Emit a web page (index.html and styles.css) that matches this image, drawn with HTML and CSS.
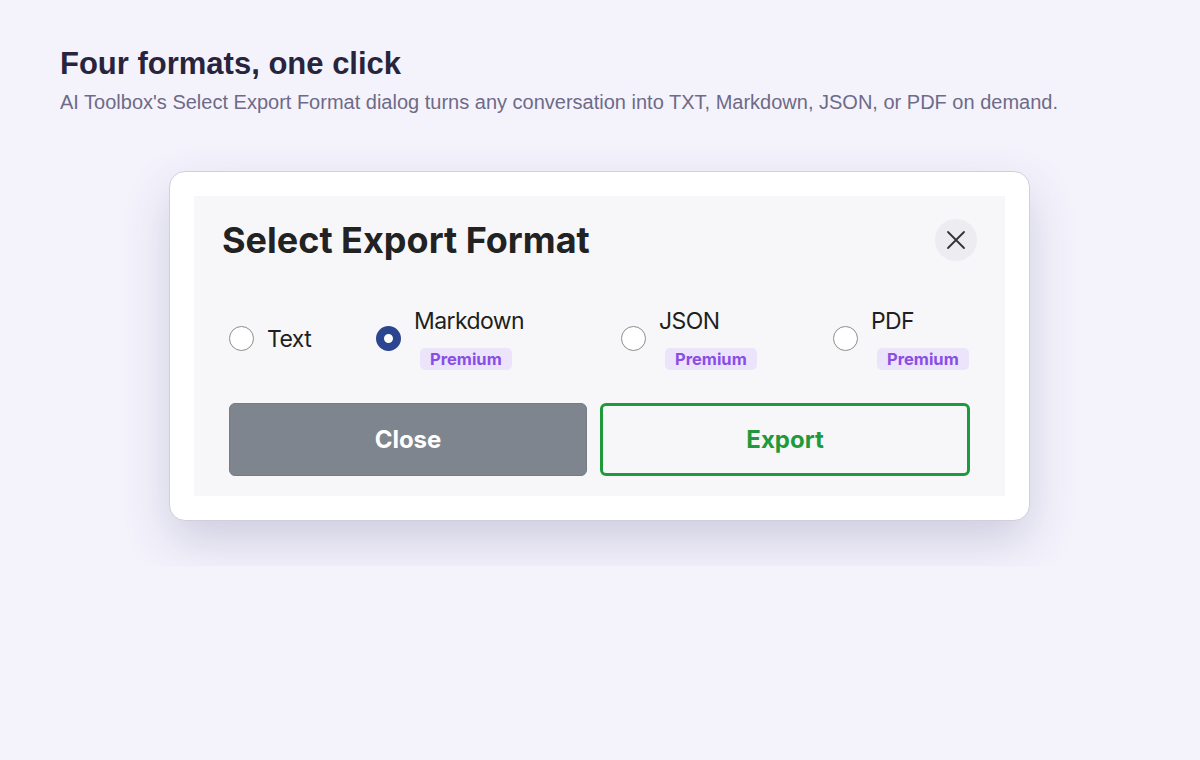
FILE: index.html
```html
<!DOCTYPE HTML>
<html lang="en">
<head>
    <meta charset="utf-8">
    <title>Select Export Format</title>
<link rel="stylesheet" href="styles.css">
</head>
<body>
<h1>Four formats, one click</h1>
<p class="lead">AI Toolbox's Select Export Format dialog turns any conversation into TXT, Markdown, JSON, or PDF on demand.</p>

<div class="card">
  <div class="panel">
    <div class="head">
      <h2>Select Export Format</h2>
      <button class="x" aria-label="Close">
        <svg width="20" height="20" viewBox="0 0 20 20"><path d="M2 2 L18 18 M18 2 L2 18" stroke="#333" stroke-width="1.8" fill="none" stroke-linecap="round"/></svg>
      </button>
    </div>
    <div class="opts">
      <label class="opt">
        <span class="radio"></span>
        <span class="name">Text</span>
      </label>
      <label class="opt">
        <span class="radio on"></span>
        <span class="stack"><span class="name">Markdown</span><span class="badge">Premium</span></span>
      </label>
      <label class="opt">
        <span class="radio"></span>
        <span class="stack"><span class="name">JSON</span><span class="badge">Premium</span></span>
      </label>
      <label class="opt">
        <span class="radio"></span>
        <span class="stack"><span class="name">PDF</span><span class="badge">Premium</span></span>
      </label>
    </div>
    <div class="actions">
      <button class="btn gray">Close</button>
      <button class="btn green">Export</button>
    </div>
  </div>
</div>
</body>
</html>
```

FILE: styles.css
```css
body {
  margin: 0;
  padding: 45px 60px;
  background: #f4f3fc;
  font-family: "Liberation Sans", Arial, sans-serif;
}
h1 {
  margin: 0;
  font-size: 31px;
  line-height: 37px;
  color: #29243d;
}
.lead {
  margin: 7px 0 0;
  font-size: 20px;
  line-height: 26px;
  color: #6e6a88;
}
.card {
  width: 811px;
  margin: 56px 0 0 109px;
  padding: 24px;
  background: #fff;
  border: 1px solid #d0cfdc;
  border-radius: 16px;
  box-shadow: 0 20px 48px rgba(60, 55, 110, 0.2);
  font-family: Inter, "Noto Sans", sans-serif;
}
.panel {
  background: #f7f7fa;
  padding: 22px 28px 20px;
}
.head {
  display: flex;
  align-items: center;
  justify-content: space-between;
  height: 44px;
}
.head h2 {
  margin: 0;
  font-size: 36px;
  font-weight: 700;
  color: #222;
}
.x {
  width: 42px;
  height: 42px;
  border: none;
  border-radius: 50%;
  background: #ececf1;
  display: flex;
  align-items: center;
  justify-content: center;
  padding: 0;
}
.opts {
  display: grid;
  grid-template-columns: 147px 245px 212px auto;
  align-items: center;
  margin: 45px 7px 0;
  height: 63px;
}
.opt {
  display: flex;
  align-items: center;
  gap: 13px;
}
.radio {
  width: 25px;
  height: 25px;
  box-sizing: border-box;
  border: 1.5px solid #8d8d8d;
  border-radius: 50%;
  background: #fff;
  flex: none;
}
.radio.on {
  border: 8px solid #2b4590;
}
.name {
  font-size: 23px;
  line-height: 28px;
  color: #1f1f1f;
  letter-spacing: -0.6px;
}
.stack {
  display: flex;
  flex-direction: column;
  align-items: flex-start;
}
.badge {
  margin: 13px 0 0 6px;
  padding: 0 10px;
  height: 22px;
  line-height: 22px;
  border-radius: 5px;
  background: #ebe4fb;
  color: #8a4de6;
  font-size: 16.5px;
  font-weight: 700;
}
.actions {
  display: grid;
  grid-template-columns: 358px 370px;
  gap: 13px;
  margin: 33px 7px 0;
}
.btn {
  height: 73px;
  border-radius: 6px;
  font-family: Inter, "Noto Sans", sans-serif;
  font-size: 24px;
  font-weight: 700;
}
.btn.gray {
  background: #7f858f;
  color: #fff;
  border: 1px solid #767c86;
}
.btn.green {
  background: #f7f7fa;
  color: #1e9a3c;
  border: 3px solid #1e9a3c;
}
```
